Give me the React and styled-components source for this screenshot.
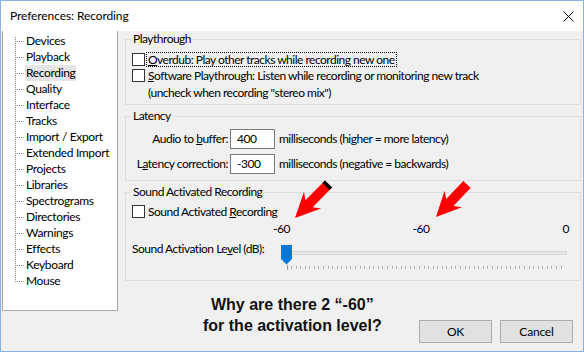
import React from "react";
import styled, { createGlobalStyle } from "styled-components";

const UI_FONT = `"Segoe UI", Lato, "Noto Sans", sans-serif`;

const Global = createGlobalStyle`
  html, body { margin: 0; padding: 0; background: #ffffff; }
  body { font-family: ${UI_FONT}; font-size: 12px; }
  *, *::before, *::after { box-sizing: border-box; }
`;

const Window = styled.div`
  position: relative;
  width: 584px;
  height: 352px;
  border: 1px solid #8cb1e4;
  background: #f0f0f0;
  display: flex;
  flex-direction: column;
  font-family: ${UI_FONT};
  font-size: 12px;
  letter-spacing: -0.5px;
  color: #000;
`;

const TitleBar = styled.div`
  height: 30px;
  flex: none;
  background: #ffffff;
  display: flex;
  align-items: center;
  justify-content: space-between;
  padding: 0 9px;
`;

const TitleText = styled.span`
  font-size: 12px;
  line-height: 16px;
  letter-spacing: -0.1px;
`;

const Body = styled.div`
  flex: 1;
  min-height: 0;
  display: flex;
  align-items: flex-start;
`;

const Tree = styled.div`
  width: 116px;
  height: 280px;
  margin-left: 1px;
  background: #ffffff;
  border: 1px solid #a9a9a9;
  border-top: none;
  padding: 2px 0 0 12px;
  display: flex;
  flex-direction: column;
  letter-spacing: -0.35px;
`;

const TreeItem = styled.div`
  display: flex;
  align-items: center;
  height: 16px;
`;

const dots = "#8c8c8c";

const Guide = styled.span`
  width: 10px;
  height: 16px;
  flex: none;
  background:
    repeating-linear-gradient(to bottom, ${dots} 0 1px, transparent 1px 2px) 0 ${(p) => (p.$first ? 4 : 0)}px / 1px ${(p) => (p.$last ? 9 : p.$first ? 12 : 16)}px no-repeat,
    repeating-linear-gradient(to right, ${dots} 0 1px, transparent 1px 2px) 2px 8px / 8px 1px no-repeat;
`;

const TreeLabel = styled.span`
  line-height: 16px;
  padding: 0 1px;
  white-space: nowrap;
  background: ${(p) => (p.$selected ? "#e5e5e5" : "transparent")};
`;

const RightCol = styled.div`
  flex: 1;
  align-self: stretch;
  display: flex;
  flex-direction: column;
  padding: 0 2px 0 7px;
`;

const Group = styled.fieldset`
  margin: ${(p) => p.$mt || 0}px 0 0 0;
  border: 1px solid #dcdcdc;
  padding: ${(p) => p.$pt}px 6px ${(p) => p.$pb}px 6px;
  min-width: 0;
`;

const Legend = styled.legend`
  padding: 0 2px;
  margin-left: -1px;
  line-height: 16px;
  font-size: 12px;
`;

const CheckRow = styled.div`
  display: flex;
  align-items: center;
  height: 16px;
`;

const Box = styled.span`
  width: 13px;
  height: 13px;
  flex: none;
  background: #ffffff;
  border: 1px solid #333333;
  margin-right: 1px;
`;

const CheckLabel = styled.span`
  border: 1px dotted ${(p) => (p.$focus ? "#000" : "transparent")};
  padding: 0 1px;
  line-height: 13px;
  white-space: nowrap;
`;

const U = styled.span`
  text-decoration: underline;
  text-underline-offset: 1px;
`;

const Hint = styled.div`
  line-height: 16px;
  margin-top: 2px;
  padding-left: 16px;
  white-space: nowrap;
`;

const FieldGrid = styled.div`
  display: grid;
  grid-template-columns: 96px 45px auto;
  column-gap: 2px;
  row-gap: 5px;
  align-items: center;
`;

const FieldLabel = styled.span`
  text-align: right;
  white-space: nowrap;
  line-height: 16px;
`;

const TextBox = styled.div`
  height: 20px;
  background: #ffffff;
  border: 1px solid #7a7a7a;
  padding-left: 6px;
  line-height: 18px;
`;

const Unit = styled.span`
  padding-left: 2px;
  white-space: nowrap;
  line-height: 16px;
`;

const SliderGrid = styled.div`
  display: grid;
  grid-template-columns: 141px 1fr;
  margin-top: 2px;
`;

const ScaleLabels = styled.div`
  grid-column: 2;
  display: grid;
  grid-template-columns: 1fr auto 1fr;
  line-height: 16px;
  padding-right: 5px;
`;

const ScaleText = styled.span`
  justify-self: ${(p) => p.$align};
`;

const LevelLabel = styled.span`
  margin-top: 4px;
  line-height: 16px;
  white-space: nowrap;
`;

const Slider = styled.div`
  position: relative;
  height: 29px;
  margin-top: 4px;
`;

const Track = styled.div`
  margin: 10px 7px 0 10px;
  height: 4px;
  background: #e7eaea;
  border: 1px solid #d6d6d6;
`;

const Thumb = styled.svg`
  position: absolute;
  left: 8px;
  top: 4px;
`;

const Ticks = styled.svg`
  display: block;
  margin-top: 10px;
`;

const BottomRow = styled.div`
  flex: 1;
  display: flex;
  align-items: flex-end;
  padding: 0 8px 8px 0;
`;

const Note = styled.div`
  align-self: flex-start;
  margin: 13px 0 0 78px;
  font-family: "Liberation Sans", Arial, sans-serif;
  font-weight: bold;
  font-size: 16px;
  line-height: 21px;
  letter-spacing: 0;
  text-align: center;
  color: #111;
  white-space: nowrap;
`;

const Buttons = styled.div`
  margin-left: auto;
  display: flex;
  gap: 8px;
`;

const Button = styled.button`
  width: 73px;
  height: 23px;
  background: #e1e1e1;
  border: 1px solid #adadad;
  font-family: ${UI_FONT};
  font-size: 12px;
  letter-spacing: -0.2px;
  color: #000;
  padding: 0;
`;

const Overlay = styled.svg`
  position: absolute;
  left: -1px;
  top: -1px;
  pointer-events: none;
`;

const treeItems = [
  "Devices",
  "Playback",
  "Recording",
  "Quality",
  "Interface",
  "Tracks",
  "Import / Export",
  "Extended Import",
  "Projects",
  "Libraries",
  "Spectrograms",
  "Directories",
  "Warnings",
  "Effects",
  "Keyboard",
  "Mouse",
];

function arrowPath(L) {
  const wing = 25;
  const joint = 20;
  const hw = 12;
  const sw = 5;
  return `M0 ${-sw} L${L - joint} ${-sw} L${L - wing} ${-hw} L${L} 0 L${L - wing} ${hw} L${L - joint} ${sw} L0 ${sw} Z`;
}

function Arrow({ x, y, tx, ty, cap }) {
  const dx = tx - x;
  const dy = ty - y;
  const L = Math.sqrt(dx * dx + dy * dy);
  const ang = (Math.atan2(dy, dx) * 180) / Math.PI;
  return (
    <g transform={`translate(${x} ${y}) rotate(${ang})`}>
      <path d={arrowPath(L)} fill="#ff0000" />
      {cap && <rect x="0" y="-5" width="3.5" height="10" fill="#000" />}
    </g>
  );
}

const tickXs = Array.from({ length: 61 }, (_, i) => 13.5 + (i * 274) / 60);

export default function App() {
  return (
    <>
      <Global />
      <Window>
        <TitleBar>
          <TitleText>Preferences: Recording</TitleText>
          <svg width="11" height="11" viewBox="0 0 11 11">
            <path d="M0.5 0.5 L10.5 10.5 M10.5 0.5 L0.5 10.5" stroke="#000" strokeWidth="1" />
          </svg>
        </TitleBar>
        <Body>
          <Tree>
            {treeItems.map((t, i) => (
              <TreeItem key={t}>
                <Guide $first={i === 0} $last={i === treeItems.length - 1} />
                <TreeLabel $selected={t === "Recording"}>{t}</TreeLabel>
              </TreeItem>
            ))}
          </Tree>
          <RightCol>
            <Group $pt={4} $pb={3}>
              <Legend>Playthrough</Legend>
              <CheckRow>
                <Box />
                <CheckLabel $focus>
                  <U>O</U>verdub: Play other tracks while recording new one
                </CheckLabel>
              </CheckRow>
              <CheckRow>
                <Box />
                <CheckLabel>
                  <U>S</U>oftware Playthrough: Listen while recording or monitoring new track
                </CheckLabel>
              </CheckRow>
              <Hint>(uncheck when recording "stereo mix")</Hint>
            </Group>

            <Group $mt={3} $pt={5} $pb={6}>
              <Legend>Latency</Legend>
              <FieldGrid>
                <FieldLabel>
                  Audio to <U>b</U>uffer:
                </FieldLabel>
                <TextBox>400</TextBox>
                <Unit>milliseconds (higher = more latency)</Unit>
                <FieldLabel>
                  L<U>a</U>tency correction:
                </FieldLabel>
                <TextBox>-300</TextBox>
                <Unit>milliseconds (negative = backwards)</Unit>
              </FieldGrid>
            </Group>

            <Group $mt={3} $pt={3} $pb={10}>
              <Legend>Sound Activated Recording</Legend>
              <CheckRow>
                <Box />
                <CheckLabel>
                  Sound Activated <U>R</U>ecording
                </CheckLabel>
              </CheckRow>
              <SliderGrid>
                <ScaleLabels>
                  <ScaleText $align="start">-60</ScaleText>
                  <ScaleText $align="center">-60</ScaleText>
                  <ScaleText $align="end">0</ScaleText>
                </ScaleLabels>
                <LevelLabel>
                  Sound Activation Le<U>v</U>el (dB):
                </LevelLabel>
                <Slider>
                  <Track />
                  <Ticks width="300" height="5">
                    {tickXs.map((x, i) => (
                      <line
                        key={i}
                        x1={Math.round(x) + 0.5}
                        x2={Math.round(x) + 0.5}
                        y1={i === 0 ? 0 : 1}
                        y2={i === 0 ? 5 : 4}
                        stroke={i === 0 ? "#9a9a9a" : "#b0b0b0"}
                        strokeWidth="1"
                      />
                    ))}
                  </Ticks>
                  <Thumb width="11" height="20" viewBox="0 0 11 20">
                    <path d="M0 0 H11 V14 L5.5 19.5 L0 14 Z" fill="#0078d7" />
                  </Thumb>
                </Slider>
              </SliderGrid>
            </Group>

            <BottomRow>
              <Note>
                Why are there 2 “-60”
                <br />
                for the activation level?
              </Note>
              <Buttons>
                <Button>OK</Button>
                <Button>Cancel</Button>
              </Buttons>
            </BottomRow>
          </RightCol>
        </Body>
        <Overlay width="584" height="352">
          <Arrow x={328.5} y={184} tx={295} ty={218} cap />
          <Arrow x={467} y={184.5} tx={436} ty={217} />
        </Overlay>
      </Window>
    </>
  );
}
